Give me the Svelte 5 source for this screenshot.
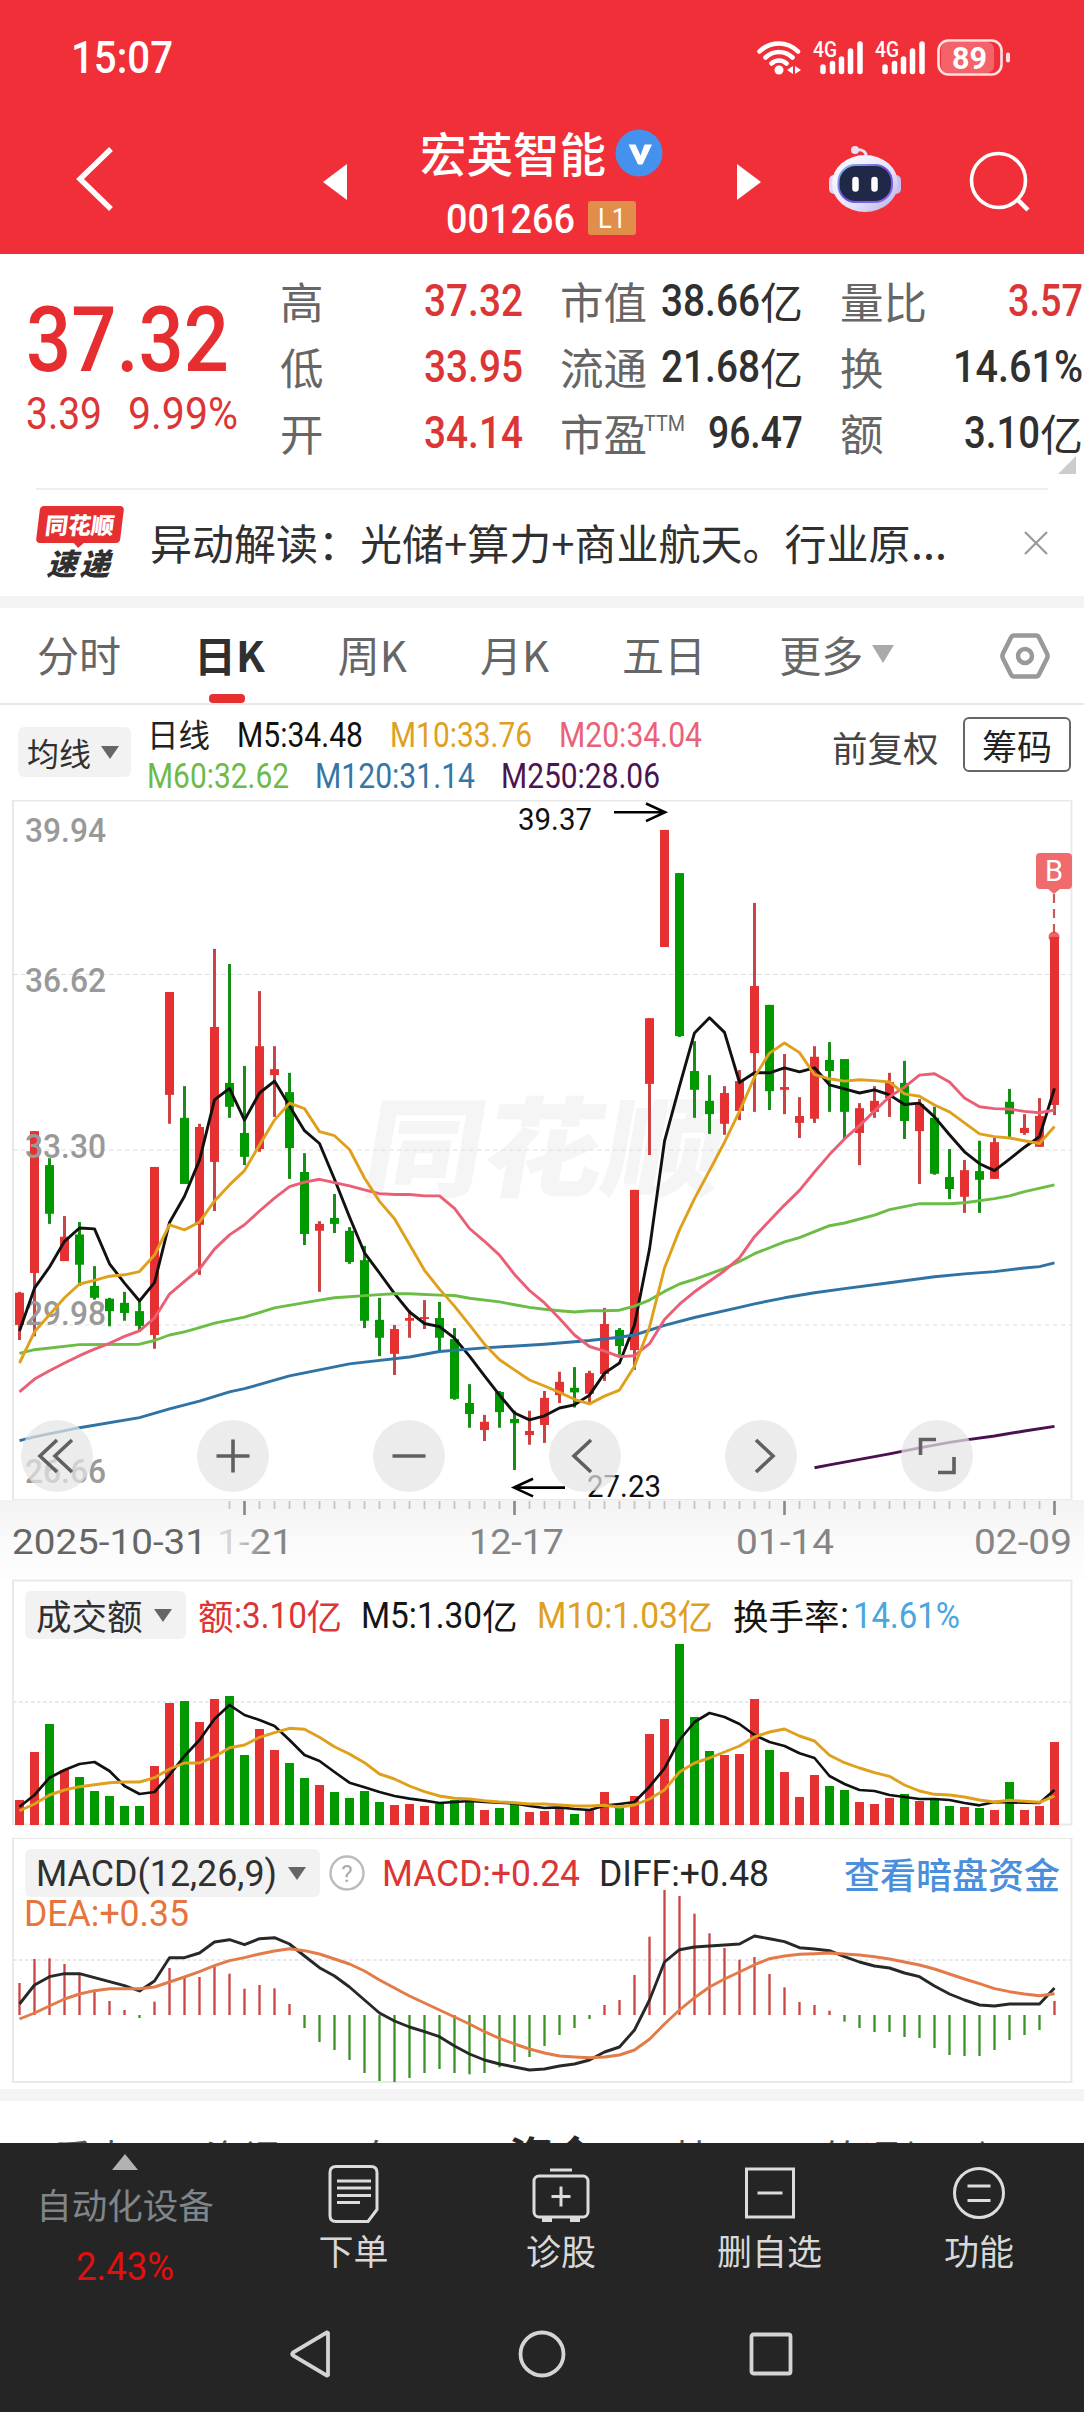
<script>
  // Candles: [rise, high, body top, body bottom, low] in plot units.
  const candles = [
    [1,1093,1095,1165,1198],[1,743,743,1052,1190],[0,802,817,923,945],[1,928,973,1026,1026],[0,941,968,1034,1080],
    [0,1037,1080,1106,1110],[0,1106,1108,1135,1168],[0,1093,1117,1139,1156],[0,1113,1135,1167,1178],[1,821,821,1187,1217],
    [1,440,440,664,727],[0,645,714,858,858],[1,727,734,947,1056],[1,346,516,810,917],[0,379,638,690,714],
    [0,601,747,799,817],[1,438,558,782,788],[1,558,608,621,712],[0,616,658,780,847],[0,791,832,967,991],
    [1,939,945,960,1093],[0,880,932,945,965],[0,952,960,1028,1032],[0,993,1024,1156,1172],[0,1106,1154,1193,1233],
    [1,1165,1174,1228,1274],[1,1133,1150,1156,1193],[1,1111,1148,1152,1174],[0,1115,1150,1193,1222],[0,1172,1196,1326,1328],
    [0,1294,1335,1359,1389],[1,1361,1376,1394,1418],[0,1309,1311,1355,1389],[0,1352,1370,1379,1481],[1,1352,1396,1405,1426],
    [1,1309,1324,1383,1422],[1,1267,1289,1318,1335],[0,1257,1302,1312,1345],[1,1265,1270,1315,1333],[1,1128,1163,1272,1287],
    [0,1172,1176,1211,1230],[1,871,871,1220,1263],[1,497,497,640,795],[1,87,87,342,342],[0,181,181,536,538],
    [0,547,612,653,714],[0,621,677,706,749],[1,645,660,727,751],[1,610,634,699,719],[1,246,427,573,701],
    [0,468,468,656,697],[1,575,647,653,706],[1,669,710,725,758],[1,558,581,716,725],[0,549,588,612,701],
    [0,586,586,701,760],[1,682,693,747,817],[1,645,677,701,714],[1,616,636,671,712],[0,590,638,721,760],
    [1,673,684,743,858],[0,690,714,836,838],[0,782,843,869,891],[1,806,828,886,921],[0,764,830,849,921],
    [1,758,767,847,847],[0,651,679,706,756],[1,706,736,747,751],[1,671,710,777,777],[1,320,320,686,708]
  ];
  const ma5 = [1178,1085,1039,983,954,956,1032,1074,1113,1073,942,885,806,675,650,719,660,634,688,742,770,848,930,1008,1052,1097,1137,1162,1169,1194,1233,1276,1318,1357,1372,1363,1346,1339,1318,1270,1248,1165,1000,765,645,529,496,528,637,616,616,605,614,605,642,651,660,653,664,685,682,712,751,788,814,829,804,778,755,650];
  const ma10 = [1248,1180,1143,1106,1076,1068,1059,1056,1049,1013,947,958,941,895,860,829,773,719,682,694,744,753,783,845,896,934,990,1046,1087,1124,1165,1207,1241,1263,1285,1298,1312,1327,1337,1320,1307,1255,1170,1041,958,890,829,767,700,625,573,551,572,620,629,634,631,633,636,662,667,686,701,725,749,755,758,764,770,733];
  const ma20 = [1311,1283,1265,1248,1232,1218,1205,1190,1178,1150,1098,1070,1043,1000,969,947,917,889,864,854,848,855,862,871,879,881,881,884,884,911,955,983,1013,1055,1090,1117,1151,1187,1212,1222,1234,1232,1206,1153,1120,1093,1070,1047,1019,973,938,904,872,832,794,760,731,699,668,647,621,618,636,671,690,694,695,700,703,697];
  const ma60 = [[0,1227],[1,1219],[4,1208],[8,1207],[9,1199],[10,1187],[11,1180],[12,1171],[13,1161],[15,1148],[17,1128],[20,1111],[21,1106],[24,1099],[25,1097],[26,1097],[28,1100],[29,1101],[30,1107],[32,1115],[33,1121],[34,1127],[35,1131],[36,1134],[37,1137],[38,1134],[39,1134],[40,1133],[41,1124],[42,1111],[43,1092],[44,1076],[45,1066],[47,1042],[48,1027],[49,1010],[51,984],[52,975],[54,949],[55,943],[57,926],[58,914],[60,901],[62,901],[63,899],[65,890],[66,884],[67,875],[69,860]];
  const ma120 = [[0,1417],[1,1409],[4,1389],[8,1367],[10,1348],[12,1331],[14,1311],[15,1304],[18,1276],[20,1263],[22,1250],[23,1246],[26,1235],[28,1223],[31,1215],[35,1207],[38,1199],[40,1192],[41,1187],[43,1166],[45,1149],[48,1127],[49,1119],[51,1106],[53,1095],[55,1086],[58,1073],[61,1060],[63,1054],[65,1049],[67,1041],[68,1038],[69,1030]];
  const ma250 = [[53,1476],[54,1470],[56,1458],[58,1446],[60,1433],[62,1421],[63,1416],[65,1407],[67,1396],[69,1386]];

  const vol = [960,816,732,870,891,933,948,978,978,858,669,663,726,657,648,825,747,810,849,894,915,936,954,933,966,975,972,978,972,960,966,990,984,966,996,993,984,1002,990,936,978,948,762,717,492,711,813,825,822,657,810,876,951,885,918,930,966,972,954,942,963,957,978,981,984,990,906,990,978,786];
  const vol5 = [980,945,893,870,852,846,873,918,942,936,885,828,780,717,675,705,720,738,780,825,843,876,908,922,936,948,956,962,969,966,963,966,968,970,978,984,982,987,990,977,972,966,920,865,780,726,699,711,732,765,786,798,820,834,888,912,930,933,945,951,957,957,960,969,976,966,967,968,969,930];
  const vol10 = [992,972,945,930,920,914,908,906,906,893,867,849,849,830,803,795,772,758,745,748,772,800,822,848,882,897,918,935,948,955,957,962,966,968,972,972,975,978,978,976,981,975,957,930,876,849,834,816,798,771,756,747,768,783,826,848,864,878,889,915,933,943,945,951,960,966,961,964,967,948];

  const macd = [489,417,415,432,463,513,543,570,594,545,444,474,471,438,461,506,495,505,552,624,666,690,720,759,783,786,774,759,747,759,763,759,742,726,711,678,645,624,597,555,540,465,350,210,228,281,340,384,419,411,462,502,546,555,572,605,624,636,636,651,654,684,705,708,708,690,660,645,630,543];
  const diff = [552,495,470,461,461,473,485,497,513,483,413,413,399,366,359,374,356,353,372,408,443,468,501,540,579,603,621,635,650,678,702,720,732,741,750,747,738,732,720,696,681,630,540,426,389,381,378,375,372,348,356,365,383,387,392,410,426,438,444,459,470,498,522,540,555,558,552,552,552,504];
  const dea = [597,579,558,537,522,512,506,506,506,501,486,471,455,437,422,413,402,393,386,392,402,417,432,453,480,504,528,549,570,591,612,635,655,672,687,699,708,711,713,711,705,690,658,612,570,533,501,477,456,434,416,408,403,401,399,402,405,410,417,426,435,447,462,477,491,506,515,522,527,521];

  const x = (i) => 19.5 + i * 15;
  const kY = (v) => v / 2.178 - 10;
  const volY = (v) => v / 3 - 99;
  const macdY = (v) => v / 3 - 18;
  const line = (data, fy) =>
    data.map((d, i) => (Array.isArray(d) ? `${x(d[0])},${fy(d[1]).toFixed(1)}` : `${x(i)},${fy(d).toFixed(1)}`)).join(' ');

  const averages = [
    [ma120, '#2f73a5'], [ma250, '#4a1050'], [ma60, '#6bbd45'], [ma20, '#ea5f76'], [ma10, '#dfa01c']
  ];
  const labels = [['39.94', 41.5], ['36.62', 192], ['33.30', 358], ['29.98', 525], ['26.66', 683]];
  const stats = [
    [['高', '', '37.32', 99, '', true], ['低', '', '33.95', 99, '', true], ['开', '', '34.14', 99, '', true]],
    [['市值', '', '38.66', 99, '亿'], ['流通', '', '21.68', 99, '亿'], ['市盈', 'TTM', '96.47', 95, '']],
    [['量比', '', '3.57', 75, '', true], ['换', '', '14.61%', 130, ''], ['额', '', '3.10', 76, '亿']]
  ];
</script>

{#snippet num(t, w, h, color = 'currentColor', weight = 400)}
  <!-- h is the cap height; the box leaves equal room above and below it -->
  <svg class="num" width={w} height={h * 1.6}>
    <text x="0" y={h * 1.3} font-size={h / 0.711} fill={color} font-weight={weight} textLength={w} lengthAdjust="spacingAndGlyphs">{t}</text>
  </svg>
{/snippet}

{#snippet caret(w, h, color)}
  <svg width={w} height={h} viewBox="0 0 18 14" preserveAspectRatio="none"><path d="M0 0h18l-9 14z" fill={color} /></svg>
{/snippet}

<main>
  <header>
    <div class="status">
      {@render num('15:07', 102, 31, '#fff', 500)}
      <svg width="274" height="44" viewBox="754 34 274 44" fill="none" stroke="#fff" stroke-linecap="round">
        <g stroke-width="4.6">
          <path d="M759.500 49.500a27 27 0 0 1 38.500 0M765.500 55.500a19.500 19.500 0 0 1 27 0M771.500 61.500a11 11 0 0 1 15 0" />
        </g>
        <circle cx="779" cy="68" r="4.500" fill="#fff" stroke="none" />
        <path d="M793 64v8l-6-4zM795 64v8l6-4z" fill="#fff" stroke="none" />
        {#each [0, 62] as dx}
          <text x={813 + dx} y="55" class="din" font-size="22" font-weight="500" fill="#fff" stroke="none" textLength="24" lengthAdjust="spacingAndGlyphs">4G</text>
          <g stroke-width="5.5">
            <path d="M{823 + dx} 65v4.500M{832.500 + dx} 61.500v8M{841.500 + dx} 57v12.500M{850.500 + dx} 49v20.500M{860 + dx} 42v27.500" />
          </g>
        {/each}
        <rect x="941" y="40" width="53" height="31" rx="7" fill="#f4636a" stroke="none" />
        <rect x="938.500" y="38.500" width="63" height="34" rx="10" stroke-width="2.600" stroke="#ffe3e3" />
        <path d="M1008 52.500v6" stroke-width="4" stroke="#ffe3e3" />
        <text x="952" y="66.500" class="din" font-size="31" font-weight="700" fill="#fff" stroke="none" textLength="35" lengthAdjust="spacingAndGlyphs">89</text>
      </svg>
    </div>
    <div class="bar">
      <svg class="back" width="42" height="66" viewBox="0 0 42 66"><path d="M37 3 6 33 37 63" fill="none" stroke="#fff" stroke-width="5.400" /></svg>
      <svg class="prev" width="24" height="36"><path d="M24 0v36L0 18z" fill="#fff" /></svg>
      <div class="title">
        <div class="name">宏英智能
          <svg width="48" height="48"><circle cx="24" cy="24" r="23.500" fill="#4492ee" /><path d="M13.500 15.500h7l5 11 4-11h7.500L27.500 35.500h-4.500z" fill="#fff" /></svg>
        </div>
        <div class="code">{@render num('001266', 129, 29, '#fff', 500)}<span class="lv">{@render num('L1', 28, 20, '#fff')}</span></div>
      </div>
      <svg class="next" width="24" height="36"><path d="M0 0v36l24-18z" fill="#fff" /></svg>
      <svg class="robot" width="72" height="68" viewBox="829 145 72 68">
        <defs>
          <linearGradient id="shell" x1="0" y1="0" x2="1" y2="1"><stop offset="0" stop-color="#fff" /><stop offset=".6" stop-color="#e4e2fb" /><stop offset="1" stop-color="#b3aee8" /></linearGradient>
          <linearGradient id="rim" x1="0" y1="0" x2="1" y2="1"><stop offset="0" stop-color="#8ec4ee" /><stop offset=".5" stop-color="#6a4fd8" /><stop offset="1" stop-color="#8b6cf0" /></linearGradient>
        </defs>
        <path d="M866 158c1-6-3-9-10-8" fill="none" stroke="#e8dff8" stroke-width="3" />
        <circle cx="855" cy="150" r="4" fill="#eadff5" />
        <rect x="829" y="175" width="10" height="19" rx="5" fill="#dcd8f5" />
        <rect x="891" y="175" width="10" height="19" rx="5" fill="#c4bff0" />
        <ellipse cx="865" cy="183.500" rx="33" ry="28.500" fill="url(#shell)" />
        <rect x="838.500" y="165" width="53.500" height="37" rx="17" fill="#202847" stroke="url(#rim)" stroke-width="2" />
        <path d="M855.500 180v8.500M874.500 180v8.500" stroke="#fff" stroke-width="6.500" stroke-linecap="round" />
      </svg>
      <svg class="search" width="62" height="62" viewBox="969 151 62 62"><circle cx="998.500" cy="180.500" r="27" fill="none" stroke="#fff" stroke-width="3.600" /><path d="m1018 200 10 10" stroke="#fff" stroke-width="4.500" /></svg>
    </div>
  </header>

  <section class="quote">
    <div class="price">
      {@render num('37.32', 203, 64, '#e62e30', 500)}
      <div class="change">{@render num('3.39', 76, 32, '#dc3535')}{@render num('9.99%', 110, 32, '#dc3535')}</div>
    </div>
    {#each stats as col}
      <dl>
        {#each col as [k, sup, v, w, unit, red]}
          <div><dt>{k}{#if sup}<span class="sup">{@render num(sup, 41, 16)}</span>{/if}</dt><dd class:red>{@render num(v, w, 31, 'currentColor', 500)}<span>{unit}</span></dd></div>
        {/each}
      </dl>
    {/each}
    <svg class="corner" width="18" height="18"><path d="M18 0v18H0z" fill="#ccc" /></svg>
  </section>

  <section class="news">
    <div class="logo"><b>同花顺</b><i>速递</i></div>
    <p>异动解读：光储+算力+商业航天。行业原<span>…</span></p>
    <svg width="24" height="24"><path d="m1 1 22 22M23 1 1 23" stroke="#999" stroke-width="2.200" /></svg>
  </section>

  <nav class="tabs">
    <span>分时</span><span class="on">日K</span><span>周K</span><span>月K</span><span>五日</span>
    <span>更多{@render caret(22, 18, '#aaa')}</span>
    <svg class="gear" width="50" height="46"><path d="M14 2.500h22q2 0 3 2l8 16q1.200 2.500 0 5l-8 16q-1 2-3 2H14q-2 0-3-2l-8-16q-1.200-2.500 0-5l8-16q1-2 3-2z" fill="none" stroke="#999" stroke-width="4.500" /><circle cx="25" cy="23" r="7" fill="none" stroke="#999" stroke-width="4.500" /></svg>
  </nav>

  <section class="legend">
    <button class="pill ma">均线{@render caret(18, 13, '#666')}</button>
    <div class="lines">
      <div class="first"><em>日线</em>{@render num('M5:34.48', 126, 25, '#111')}{@render num('M10:33.76', 142, 25, '#e0a01f')}{@render num('M20:34.04', 143, 25, '#ea6278')}</div>
      <div>{@render num('M60:32.62', 142, 25, '#6dbb47')}{@render num('M120:31.14', 160, 25, '#3576a4')}{@render num('M250:28.06', 159, 25, '#4c1450')}</div>
    </div>
    <span class="adj">前复权</span>
    <button class="chips">筹码</button>
  </section>

  <svg class="chart" width="1084" height="701">
    <rect x="13" y="0.500" width="1058.500" height="699.500" fill="#fff" stroke="#e9e9e9" stroke-width="2" />
    <text x="360" y="388" class="mark" textLength="360" lengthAdjust="spacingAndGlyphs" transform="translate(67 0) skewX(-10)">同花顺</text>
    {#each [174.500, 350, 525] as y}
      <path d="M13 {y}H1072" stroke="#dedede" stroke-dasharray="4.500 3.500" />
    {/each}
    {#each candles as [up, hi, t, b, lo], i}
      <rect x={x(i) - 1.500} y={kY(hi)} width="3" height={kY(lo) - kY(hi)} fill={up ? '#cb4343' : '#198c19'} />
      <rect x={x(i) - 4.500} y={kY(t)} width="9" height={kY(b) - kY(t)} fill={up ? '#e53131' : '#009a00'} />
    {/each}
    {#each labels as [t, y]}
      <text x="25" {y} class="din ylab" textLength="81" lengthAdjust="spacingAndGlyphs">{t}</text>
    {/each}
    <polyline points={line(ma5, kY)} stroke="#111" stroke-width="2.900" />
    {#each averages as [data, color]}
      <polyline points={line(data, kY)} stroke={color} stroke-width="2.900" />
    {/each}
    <text x="518" y="29.500" class="din tag" textLength="74" lengthAdjust="spacingAndGlyphs">39.37</text>
    <path d="M614 12.300h50M646 3.500l19 8.800-19 8.800" class="arrow" />
    <text x="587" y="696.500" class="din tag" textLength="74" lengthAdjust="spacingAndGlyphs">27.23</text>
    <path d="M565 687.600h-50M533 678.800l-19 8.800 19 8.800" class="arrow" />
    <path d="M1054 94v42" stroke="#c85a5a" stroke-width="2.200" stroke-dasharray="9 6" />
    <circle cx="1054" cy="137" r="5.500" fill="#e53131" opacity=".75" />
    <path d="M1040 53h28q4 0 4 4v28q0 4-4 4h-8l-6 5-6-5h-8q-4 0-4-4V57q0-4 4-4z" fill="#f06b6e" />
    <text x="1054" y="81" class="din" text-anchor="middle" font-size="29" fill="#fff">B</text>
    {#each [57, 233, 409, 585, 761, 937] as cx}
      <circle {cx} cy="656" r="36" fill="#e4e4e4" fill-opacity=".72" />
    {/each}
    <g fill="none" stroke="#606060" stroke-width="3.600">
      <path d="M57 640 40 656l17 16M72 640 55 656l17 16" />
      <path d="M216.500 656h33M233 639.500v33M392.500 656h33" />
      <path d="M591 640l-17 16 17 16M756 640l17 16-17 16" />
      <path d="M920.500 655v-15.500H936M938 672.500h16V657" />
    </g>
  </svg>

  <svg class="axis" width="1084" height="79">
    <defs>
      <linearGradient id="fade" x1="0" x2="1"><stop offset="0" stop-color="#858585" stop-opacity=".25" /><stop offset=".25" stop-color="#858585" stop-opacity=".35" /><stop offset=".62" stop-color="#858585" /></linearGradient>
    </defs>
    {#each candles as _, i}
      {#if i > 13}
        <path d="M{x(i)} 1V{(i - 15) % 18 === 0 ? 15 : 9}" stroke={(i - 15) % 18 === 0 ? '#888' : '#c4c4c4'} stroke-width={(i - 15) % 18 === 0 ? 2.600 : 1.800} />
      {/if}
    {/each}
    <g class="din dates">
      <text x="12" y="54" fill="#666" class="from" textLength="195" lengthAdjust="spacingAndGlyphs">2025-10-31</text>
      <text x="217" y="54" class="faded" textLength="76" lengthAdjust="spacingAndGlyphs">1-21</text>
      <text x="469" y="54" textLength="95" lengthAdjust="spacingAndGlyphs">12-17</text>
      <text x="736" y="54" textLength="98" lengthAdjust="spacingAndGlyphs">01-14</text>
      <text x="974" y="54" textLength="98" lengthAdjust="spacingAndGlyphs">02-09</text>
    </g>
  </svg>

  <section class="panel">
    <svg width="1084" height="248">
      <path d="M13 123H1071" stroke="#e2e2e2" stroke-width="1.500" stroke-dasharray="3.500 2.500" />
      <rect x="13" y="1.500" width="1058.500" height="244" fill="none" stroke="#e9e9e9" stroke-width="2" />
      {#each vol as v, i}
        <rect x={x(i) - 4.500} y={volY(v)} width="9" height={246 - volY(v)} fill={candles[i][0] ? '#e53131' : '#009a00'} />
      {/each}
      <polyline points={line(vol5, volY)} stroke="#111" stroke-width="2.700" />
      <polyline points={line(vol10, volY)} stroke="#dfa01c" stroke-width="2.900" />
    </svg>
    <div class="info vol">
      <button class="pill">成交额{@render caret(18, 13, '#666')}</button>
      <span class="r">额{@render num(':3.10', 73, 26)}亿</span>
      <span>{@render num('M5:1.30', 121, 26)}亿</span>
      <span class="y">{@render num('M10:1.03', 141, 26)}亿</span>
      <span class="turn">换手率{@render num(':', 9, 26)}</span>
      <span class="b">{@render num('14.61%', 107, 26)}</span>
    </div>
  </section>

  <section class="panel second">
    <svg width="1084" height="251">
      <path d="M13 122H1071" stroke="#e2e2e2" stroke-width="1.500" stroke-dasharray="3.500 2.500" />
      <rect x="13" y="0" width="1058.500" height="244" fill="none" stroke="#e9e9e9" stroke-width="2" />
      {#each macd as v, i}
        <path d="M{x(i)} {macdY(585)}V{macdY(v)}" stroke={v < 585 ? '#cb4343' : '#3a9226'} stroke-width="2.300" />
      {/each}
      <polyline points={line(diff, macdY)} stroke="#282828" stroke-width="2.900" />
      <polyline points={line(dea, macdY)} stroke="#e37a48" stroke-width="2.900" />
    </svg>
    <div class="info osc">
      <button class="pill">{@render num('MACD(12,26,9)', 241, 26)}{@render caret(18, 13, '#666')}</button>
      <svg class="help" width="36" height="36"><circle cx="18" cy="18" r="16.500" fill="none" stroke="#bbb" stroke-width="2.400" /><text x="18" y="26.500" class="din" text-anchor="middle" font-size="24" fill="#aaa">?</text></svg>
      <span class="r">{@render num('MACD:+0.24', 198, 26)}</span>
      <span class="d">{@render num('DIFF:+0.48', 170, 26)}</span>
      <a href="#flow">查看暗盘资金</a>
      <div class="dea">{@render num('DEA:+0.35', 165, 26)}</div>
    </div>
  </section>

  <section class="peek"><span>看点</span><span>资讯</span><span>盘口</span><span class="on">资金</span><span>基面</span><span>简况(F10)</span></section>

  <footer>
    <div class="tools">
      <div class="sector">
        <svg width="26" height="16"><path d="M13 0 26 16H0z" fill="#b2b2b2" /></svg>
        <span>自动化设备</span>
        {@render num('2.43%', 98, 27, '#e30f0f')}
      </div>
      <div><svg width="60" height="60" viewBox="0 0 60 60"><path d="M12 3.500h35q6 0 6 6v37l-9 12H12q-6 0-6-6v-43q0-6 6-6z" /><path d="M13 18h34M13 25h34M13 32.500h34M13 39.500h23" /></svg>下单</div>
      <div><svg width="60" height="60" viewBox="0 0 60 60"><rect x="3" y="13" width="54" height="41" rx="5" /><path d="M19 7h22M30 23.500v20M20.500 33.500h19" /><path d="M11 57h10M39 57h10" stroke-width="4" /></svg>诊股</div>
      <div><svg width="60" height="60" viewBox="0 0 60 60"><rect x="6.500" y="6" width="47" height="48" /><path d="M17.500 30h25" /></svg>删自选</div>
      <div><svg width="60" height="60" viewBox="0 0 60 60"><circle cx="30" cy="30" r="24.500" /><path d="M18.500 23h23M18.500 37.500h23" /></svg>功能</div>
    </div>
    <div class="sys">
      <svg width="46" height="52"><path d="M40 5v42q-1 1-2 0L5 27.500q-1.500-1.500 0-3L38 5q1-1 2 0z" /></svg>
      <svg width="50" height="50"><circle cx="25" cy="25" r="21.500" /></svg>
      <svg width="46" height="46"><rect x="3.500" y="3.500" width="39" height="39" rx="2" /></svg>
    </div>
  </footer>
</main>

<style>
  :global(body) { background: #fff; }
  main {
    width: 1084px; height: 2412px; overflow: hidden; display: flex; flex-direction: column;
    background: #fff; color: #333; font-family: "Noto Sans CJK SC", sans-serif; line-height: 1;
  }
  svg { display: block; flex: none; }
  button { border: 0; padding: 0; margin: 0; font: inherit; color: inherit; background: none; line-height: 1; }
  .num { overflow: visible; font-family: Roboto, sans-serif; }
  .din { font-family: Roboto, sans-serif; }
  polyline { fill: none; stroke-linejoin: round; }

  header { background: #f12f38; height: 254px; color: #fff; flex: none; }
  .status { height: 112px; display: flex; align-items: center; justify-content: space-between; padding: 3px 56px 0 71px; box-sizing: border-box; }
  .bar { height: 142px; display: flex; padding-left: 74px; }
  .back { margin-top: 34px; }
  .prev { margin: 52px 0 0 207px; }
  .title { width: 390px; display: flex; flex-direction: column; }
  .name { display: flex; align-items: center; gap: 9px; height: 48px; margin: 16px 0 0 73px; font-size: 46.500px; font-weight: 500; white-space: nowrap; }
  .name svg { margin-top: 2px; }
  .code { display: flex; align-items: center; gap: 13px; margin: 25px 0 0 99px; height: 34px; }
  .lv { width: 48px; height: 34px; background: #e18e4b; border-radius: 3px; display: flex; align-items: center; justify-content: center; }
  .next { margin-top: 52px; }
  .robot { margin: 33px 0 0 68px; }
  .search { margin: 39px 0 0 68px; }

  .quote { position: relative; height: 234px; display: flex; flex: none; }
  .price { width: 281px; box-sizing: border-box; padding: 34px 0 0 26px; color: #dc3535; }
  .change { display: flex; gap: 26px; margin-top: -3px; }
  dl { width: 243px; margin: 14px 38px 0 -1px; flex: none; }
  dl:last-of-type { margin-right: 0; }
  dl div { height: 66px; display: flex; align-items: center; justify-content: space-between; font-size: 43.500px; }
  dt { color: #666; display: flex; align-items: center; margin-top: -1px; }
  .sup { margin-bottom: 20px; margin-left: -3px; }
  dd { margin: 0; display: flex; align-items: center; color: #303030; font-size: 43px; }
  dd span { margin-top: -1px; }
  dd.red { color: #dc3535; }
  .corner { position: absolute; left: 1058px; top: 202px; }

  .news { height: 106px; flex: none; margin: 0 36px; border-top: 2px solid #eee; display: flex; align-items: center; }
  .news p { margin: -3px auto 0 26px; font-size: 42px; line-height: 60px; white-space: nowrap; color: #303030; }
  .news p span { font-family: "Noto Sans", sans-serif; font-size: 46px; line-height: 1; }
  .logo { width: 88px; height: 74px; display: flex; flex-direction: column; align-items: center; gap: 4px; }
  .logo b { width: 84px; height: 37px; border-radius: 4px; background: #e62f31; color: #fff; transform: skewX(-7deg); font-size: 23px; font-weight: 900; line-height: 37px; text-align: center; position: relative; }
  .logo b::after { content: ""; position: absolute; left: 38px; top: 37px; border: 5px solid transparent; border-top-color: #e62f31; border-bottom: 0; }
  .logo i { font-size: 30px; font-weight: 900; letter-spacing: 3px; color: #303030; transform: skewX(-3deg); }

  .tabs { height: 109px; box-sizing: border-box; border-top: 12px solid #f4f4f4; border-bottom: 2px solid #e8e8e8; flex: none; display: flex; align-items: center; padding-left: 37px; color: #666; font-size: 42px; }
  .tabs span { height: 95px; display: flex; align-items: center; gap: 9px; margin-right: 73px; white-space: nowrap; padding-bottom: 4px; box-sizing: border-box; }
  .tabs .on { color: #303030; font-weight: 700; position: relative; }
  .tabs .on::after { content: ""; position: absolute; left: 15px; bottom: 0; width: 36px; height: 9px; border-radius: 4px; background: #e62f31; }
  .gear { margin-left: 33px; }

  .legend { height: 95px; flex: none; display: flex; padding-left: 18px; }
  .pill { background: #f2f2f2; border-radius: 6px; display: flex; align-items: center; gap: 11px; color: #303030; }
  .ma { width: 113px; height: 50px; margin-top: 22px; font-size: 32px; padding-left: 9px; box-sizing: border-box; gap: 10px; }
  .lines { margin: 8px 0 0 16px; width: 685px; }
  .lines div { height: 41px; display: flex; align-items: center; gap: 26px; }
  .lines .first { gap: 27px; }
  em { font-style: normal; font-size: 31.500px; color: #222; }
  .adj { font-size: 35.500px; margin-top: 24px; width: 131px; color: #444; }
  .chips { width: 108px; height: 55px; margin-top: 12px; border: 2px solid #666; border-radius: 6px; font-size: 35px; color: #222; box-sizing: border-box; }

  .chart, .axis { flex: none; }
  .chart { height: 701px; margin-bottom: -1px; }
  .mark { font-size: 108px; font-weight: 900; fill: #f5f5f5; }
  .ylab { font-size: 34px; font-weight: 500; fill: #999; }
  .tag { font-size: 30.500px; fill: #111; }
  .arrow { fill: none; stroke: #000; stroke-width: 2.600; }
  .axis { background: linear-gradient(#f3f3f3, #fbfbfb 60%, #fdfdfd); }
  .dates { font-size: 34.500px; fill: #858585; }
  .dates .from { fill: #666; }
  .dates .faded { fill: url(#fade); }

  .panel { display: grid; height: 259px; flex: none; }
  .panel > * { grid-area: 1 / 1; }
  .second { height: 251px; }
  .info { display: flex; align-items: center; align-self: start; height: 48px; padding-left: 25px; font-size: 35.500px; white-space: nowrap; }
  .info span { display: flex; align-items: center; color: #151515; }
  .info .pill { height: 48px; padding-left: 11px; box-sizing: border-box; width: 161px; font-size: 35.500px; }
  .vol { margin-top: 12px; gap: 19px; }
  .vol .r { margin-left: -7px; }
  .vol .turn { margin-left: 1px; }
  .vol .b { margin-left: -15px; }
  .info .b { color: #4aa6de; }
  .info .r { color: #dc3535; }
  .info .y { color: #e0a01f; }
  .osc { margin-top: 11px; flex-wrap: wrap; }
  .info.osc .pill { width: 295px; }
  .help { margin-left: 9px; }
  .osc .r { margin-left: 17px; }
  .info.osc .d { margin-left: 19px; color: #282828; }
  .osc a { color: #4a8fdd; text-decoration: none; margin-left: 75px; font-weight: 500; font-size: 36px; }
  .dea { width: 900px; color: #e8743b; margin: -5px 0 0 -1px; }

  .peek { height: 54px; flex: none; box-sizing: border-box; border-top: 12px solid #f4f4f4; overflow: hidden; display: flex; padding: 36px 0 0 53px; font-size: 39px; color: #555; gap: 74px; white-space: nowrap; }
  .peek .on { font-size: 44px; font-weight: 700; color: #282828; margin-top: -4px; }

  footer { height: 269px; background: #252525; color: #d8d8d8; flex: none; }
  .tools { display: grid; grid-template-columns: 250px 207px 208px 209px 210px; height: 153px; font-size: 35px; }
  .tools div { display: flex; flex-direction: column; align-items: center; gap: 9px; padding-top: 20px; }
  .tools .sector { padding-top: 11px; gap: 0; font-size: 35.500px; color: #7f868a; }
  .sector span { margin: 16px 0 23px; }
  footer svg:not(.num) { fill: none; stroke: #dcdcdc; stroke-width: 3; }
  .sector svg:not(.num) { stroke: none; }
  .sys { display: flex; align-items: center; height: 116px; padding-left: 288px; }
  .sys svg:not(.num) { stroke: #d4d4d4; stroke-width: 3.800; }
  .sys svg:nth-child(2) { margin-left: 183px; }
  .sys svg:nth-child(3) { margin-left: 181px; }
</style>
